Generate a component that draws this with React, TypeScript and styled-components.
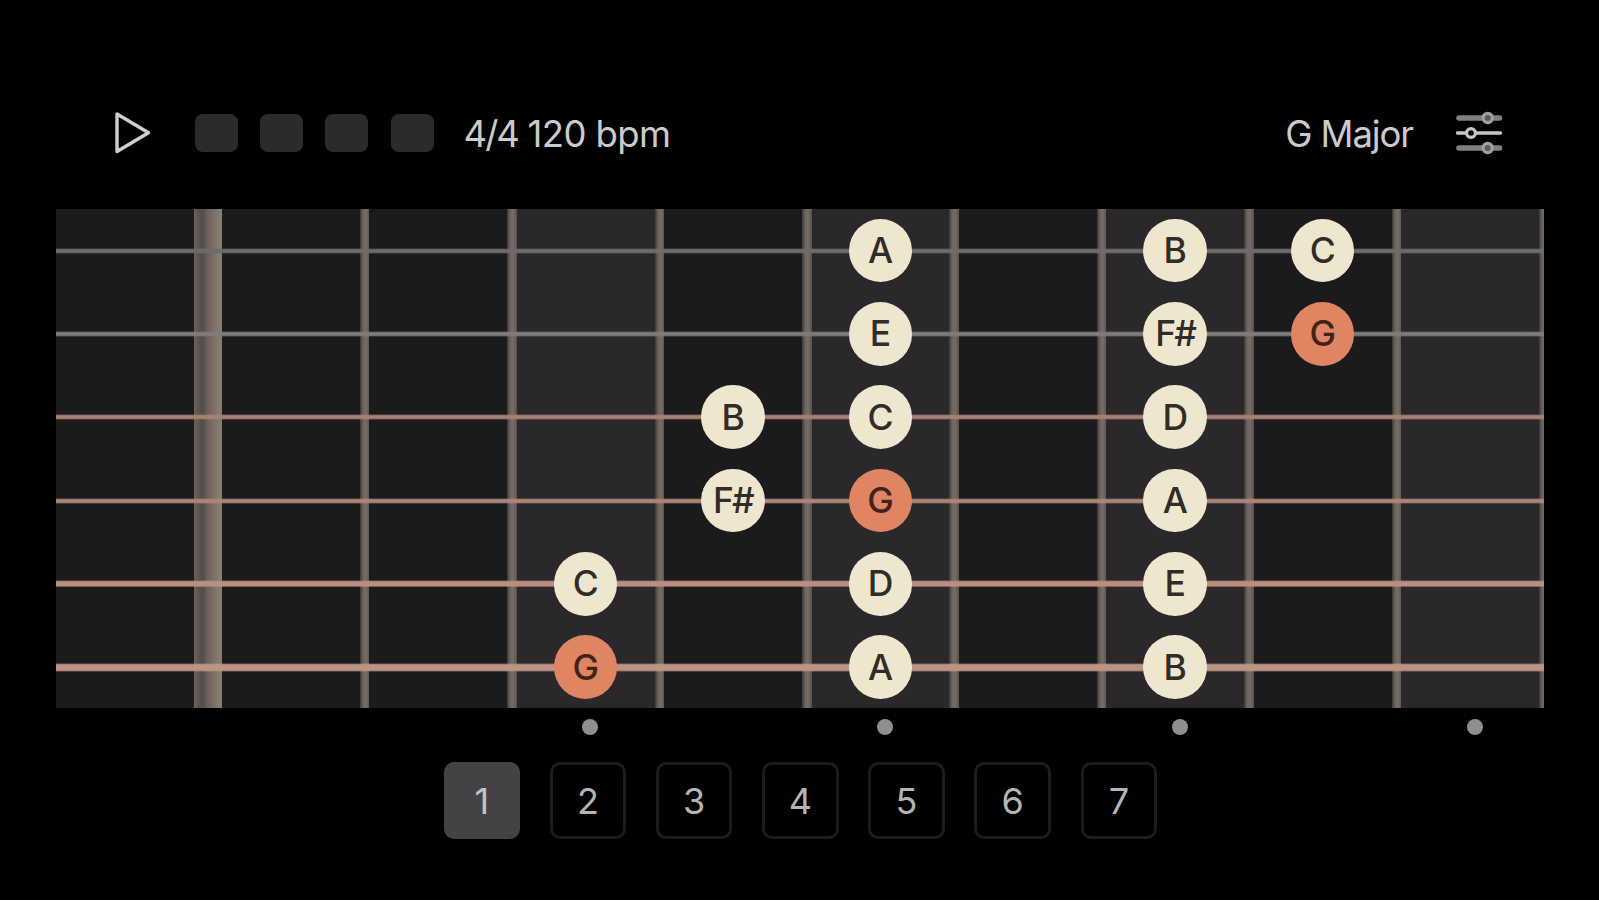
import React from 'react';
import styled, { createGlobalStyle } from 'styled-components';

const FRET = 147.4;
const NUT_CELL = 166;

const GlobalStyle = createGlobalStyle`
  body {
    margin: 0;
    background: #000;
    font-family: Inter, Roboto, "Liberation Sans", sans-serif;
  }
`;

const Screen = styled.main`
  box-sizing: border-box;
  width: 1599px;
  height: 900px;
  overflow: hidden;
  background: #000;
  display: flex;
  flex-direction: column;
  padding: 102px 55px 0 56px;
`;

const Toolbar = styled.header`
  height: 62px;
  margin-bottom: 45px;
  padding: 0 41px 0 58px;
  display: flex;
  align-items: center;
`;

const IconButton = styled.button`
  border: 0;
  padding: 0;
  background: none;
  display: flex;
`;

const Beats = styled.div`
  display: flex;
  gap: 22.2px;
  margin-left: 43px;
`;

const Beat = styled.span`
  width: 43px;
  height: 38px;
  border-radius: 8px;
  background: #2b2a2c;
`;

const Label = styled.span`
  font-size: 36.5px;
  font-weight: 420;
  line-height: 44px;
  letter-spacing: -0.6px;
  white-space: nowrap;
  color: #cbcbcb;
`;

const Tempo = styled(Label)`
  margin: 1px 0 0 30px;
`;

const Meter = styled.span`
  letter-spacing: -2px;
`;

const KeyName = styled(Label)`
  margin: 1px 42px 0 auto;
  letter-spacing: -1.1px;
`;

const Board = styled.section`
  display: grid;
  width: 1488px;
  height: 499px;
  overflow: hidden;
`;

const Layer = styled.div`
  grid-area: 1 / 1;
  display: grid;
`;

const FretLayer = styled(Layer)`
  grid-template-columns: ${NUT_CELL}px repeat(9, ${FRET}px);
`;

const StringLayer = styled(Layer)`
  grid-template-rows: repeat(6, 83.3px);
`;

const Cell = styled.div<{ $marked?: boolean }>`
  display: flex;
  justify-content: flex-end;
  background: ${(p) => (p.$marked ? '#2a282b' : '#1b1b1d')};
`;

const Nut = styled.div`
  width: 28px;
  background: linear-gradient(90deg, #6b6259 0, #5c534b 5px, #544c46 9px, #6b6058 13px, #7c7067 20px, #887c70 25px, #857b70 28px);
`;

const FretWire = styled.div`
  width: 9.5px;
  background: linear-gradient(90deg, #3c3835 0, #6b635d 3px, #756d66 6px, #5c5550 9.5px);
`;

const StringRow = styled.div<{ $color: string; $thickness: number }>`
  display: grid;
  grid-template-columns: ${NUT_CELL}px repeat(9, ${FRET}px);
  align-items: center;
  background: linear-gradient(
      transparent,
      ${(p) => p.$color} 1.7px,
      ${(p) => p.$color} calc(100% - 1.7px),
      transparent
    )
    0 50% / 100% ${(p) => p.$thickness}px no-repeat;
`;

const Note = styled.span<{ $fret: number; $root: boolean; $tight: boolean }>`
  grid-column: ${(p) => p.$fret + 1};
  grid-row: 1;
  justify-self: center;
  box-sizing: border-box;
  margin-right: 10px;
  padding-top: 1px;
  width: 63.5px;
  height: 63.5px;
  border-radius: 50%;
  display: flex;
  align-items: center;
  justify-content: center;
  font-size: 35.5px;
  font-weight: 460;
  line-height: 44px;
  letter-spacing: ${(p) => (p.$tight ? -2 : -0.5)}px;
  background: ${(p) => (p.$root ? '#e08562' : '#eee6ce')};
  color: ${(p) => (p.$root ? '#42231a' : '#302c27')};
`;

const Markers = styled.div`
  display: grid;
  grid-template-columns: ${NUT_CELL}px repeat(9, ${FRET}px);
  height: 16px;
  margin-top: 11px;
`;

const Marker = styled.span<{ $fret: number }>`
  grid-column: ${(p) => p.$fret + 1};
  grid-row: 1;
  justify-self: center;
  width: 16px;
  height: 16px;
  border-radius: 50%;
  background: #8f8f8f;
`;

const Positions = styled.nav`
  display: flex;
  gap: 29.6px;
  margin: 27px 0 0 387.5px;
`;

const Position = styled.button<{ $active: boolean }>`
  box-sizing: border-box;
  flex: none;
  width: 76.6px;
  height: 77px;
  padding: 1px 0 0;
  border: 3px solid ${(p) => (p.$active ? '#444244' : '#1c1c1d')};
  border-radius: 10px;
  background: ${(p) => (p.$active ? '#444244' : '#000')};
  color: ${(p) => (p.$active ? '#c4c3c4' : '#b4b4b4')};
  font: 440 36px/44px Inter, Roboto, sans-serif;
`;

type NoteAt = [fret: number, name: string];

const strings: { color: string; thickness: number; notes: NoteAt[] }[] = [
  { color: '#6f6b6b', thickness: 6, notes: [[5, 'A'], [7, 'B'], [8, 'C']] },
  { color: '#7f7b7b', thickness: 6, notes: [[5, 'E'], [7, 'F#'], [8, 'G']] },
  { color: '#a68073', thickness: 6, notes: [[4, 'B'], [5, 'C'], [7, 'D']] },
  { color: '#ab8577', thickness: 6, notes: [[4, 'F#'], [5, 'G'], [7, 'A']] },
  { color: '#b98f80', thickness: 7.5, notes: [[3, 'C'], [5, 'D'], [7, 'E']] },
  { color: '#bd9383', thickness: 9, notes: [[3, 'G'], [5, 'A'], [7, 'B']] },
];

const frets = [1, 2, 3, 4, 5, 6, 7, 8, 9];
const markedFrets = [3, 5, 7, 9];

const PlayIcon = () => (
  <svg width="38" height="46" viewBox="0 0 38 46" fill="none">
    <path d="M3 4V41.5L34.5 22.8Z" stroke="#cfcfcf" strokeWidth="3.4" strokeLinejoin="round" />
  </svg>
);

const SlidersIcon = () => (
  <svg width="48" height="46" viewBox="0 0 48 46" fill="none">
    <g stroke="#808080" strokeWidth="5.6" strokeLinecap="round">
      <path d="M4 8H28M38 8H44.500M4 38H28M38 38H44.500" />
    </g>
    <path d="M2.500 23H12M21 23H45.500" stroke="#c6c6c6" strokeWidth="3.4" strokeLinecap="round" />
    <g stroke="#a0a0a0" strokeWidth="3.2">
      <circle cx="32.700" cy="8" r="4.600" fill="#5a5a5a" />
      <circle cx="32.700" cy="38" r="4.600" fill="#5a5a5a" />
      <circle cx="16" cy="23" r="4.400" fill="#000" stroke="#c6c6c6" />
    </g>
  </svg>
);

export default function App() {
  return (
    <Screen>
      <GlobalStyle />
      <Toolbar>
        <IconButton aria-label="Play">
          <PlayIcon />
        </IconButton>
        <Beats>
          {[1, 2, 3, 4].map((b) => (
            <Beat key={b} />
          ))}
        </Beats>
        <Tempo>
          <Meter>4/4</Meter> 120 bpm
        </Tempo>
        <KeyName>G Major</KeyName>
        <IconButton aria-label="Settings">
          <SlidersIcon />
        </IconButton>
      </Toolbar>
      <Board>
        <FretLayer>
          <Cell>
            <Nut />
          </Cell>
          {frets.map((f) => (
            <Cell key={f} $marked={markedFrets.includes(f)}>
              <FretWire />
            </Cell>
          ))}
        </FretLayer>
        <StringLayer>
          {strings.map((s, i) => (
            <StringRow key={i} $color={s.color} $thickness={s.thickness}>
              {s.notes.map(([fret, name]) => (
                <Note key={fret} $fret={fret} $root={name === 'G'} $tight={name.length > 1}>
                  {name}
                </Note>
              ))}
            </StringRow>
          ))}
        </StringLayer>
      </Board>
      <Markers>
        {markedFrets.map((f) => (
          <Marker key={f} $fret={f} />
        ))}
      </Markers>
      <Positions>
        {[1, 2, 3, 4, 5, 6, 7].map((n) => (
          <Position key={n} $active={n === 1}>
            {n}
          </Position>
        ))}
      </Positions>
    </Screen>
  );
}
